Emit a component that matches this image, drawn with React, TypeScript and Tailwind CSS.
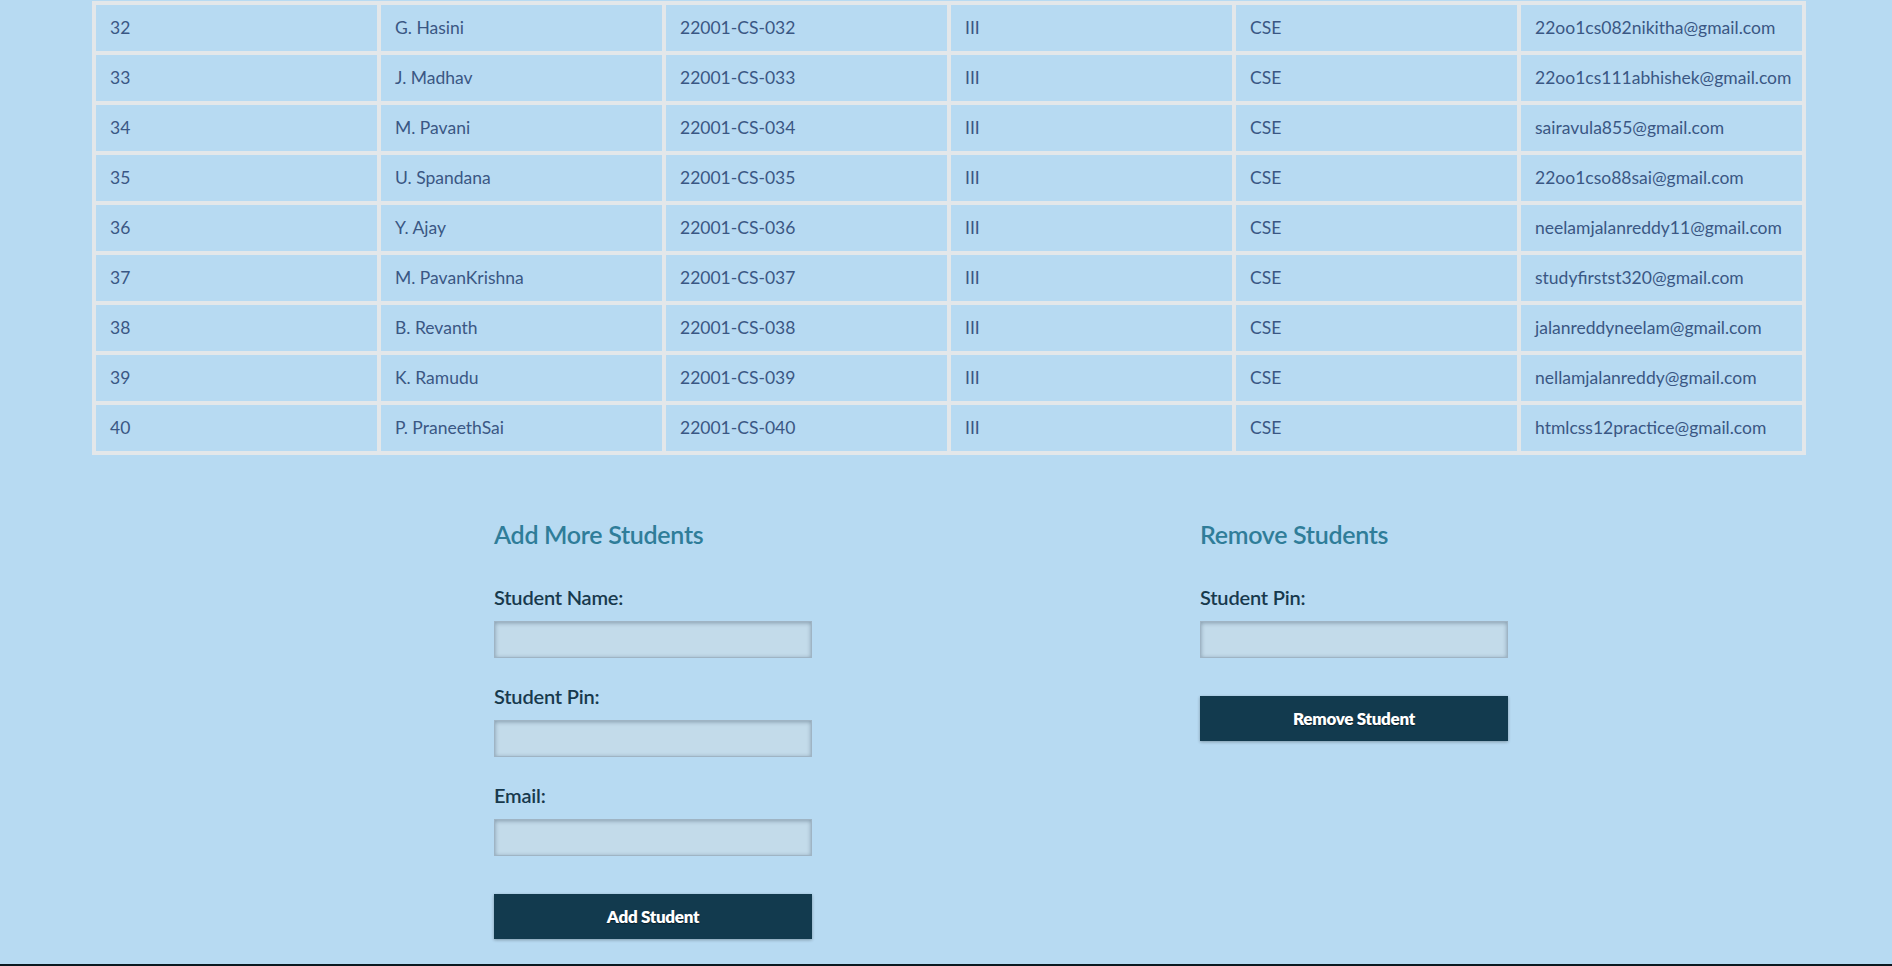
import React from 'react';

// ── DATA ──
const students = [
    { sno: 32, name: 'G. Hasini', pin: '22001-CS-032', year: 'III', branch: 'CSE', email: '22oo1cs082nikitha@gmail.com' },
    { sno: 33, name: 'J. Madhav', pin: '22001-CS-033', year: 'III', branch: 'CSE', email: '22oo1cs111abhishek@gmail.com' },
    { sno: 34, name: 'M. Pavani', pin: '22001-CS-034', year: 'III', branch: 'CSE', email: 'sairavula855@gmail.com' },
    { sno: 35, name: 'U. Spandana', pin: '22001-CS-035', year: 'III', branch: 'CSE', email: '22oo1cso88sai@gmail.com' },
    { sno: 36, name: 'Y. Ajay', pin: '22001-CS-036', year: 'III', branch: 'CSE', email: 'neelamjalanreddy11@gmail.com' },
    { sno: 37, name: 'M. PavanKrishna', pin: '22001-CS-037', year: 'III', branch: 'CSE', email: 'studyfirstst320@gmail.com' },
    { sno: 38, name: 'B. Revanth', pin: '22001-CS-038', year: 'III', branch: 'CSE', email: 'jalanreddyneelam@gmail.com' },
    { sno: 39, name: 'K. Ramudu', pin: '22001-CS-039', year: 'III', branch: 'CSE', email: 'nellamjalanreddy@gmail.com' },
    { sno: 40, name: 'P. PraneethSai', pin: '22001-CS-040', year: 'III', branch: 'CSE', email: 'htmlcss12practice@gmail.com' },
];

// ── FORM PIECES ──
function Field({ label }: { label: string }) {
    return (
        <div className="flex flex-col">
            <label className="text-[20px] leading-[22px] font-semibold text-[#17394d] tracking-[-0.2px] pt-[1px]">{label}</label>
            <input
                type="text"
                className="mt-[13px] h-[37px] w-full bg-[#c3dbea] border border-[#9fb4c4] shadow-[inset_0_1px_4px_rgba(40,60,80,0.4)] outline-none"
            />
        </div>
    );
}

function ActionButton({ children }: { children: React.ReactNode }) {
    return (
        <button className="h-[45px] w-full bg-[#123a4e] text-white text-[17px] font-extrabold tracking-[-0.3px] shadow-[0_1px_3px_rgba(0,0,0,0.3)] [text-shadow:0_1px_1px_rgba(0,0,0,0.5)]">
            {children}
        </button>
    );
}

// ── MAIN ──
export default function App() {
    return (
        <div className="h-[966px] overflow-hidden bg-[#b7daf2] flex flex-col pt-[1px]" style={{ fontFamily: 'Lato, "Open Sans", sans-serif' }}>
            {/* Student table */}
            <div className="pl-[92px]">
                <table className="w-[1714px] table-fixed bg-[#e3e7ea] border-separate border-spacing-[4px]">
                    <tbody>
                        {students.map((s) => (
                            <tr key={s.sno} className="h-[46px]">
                                {[s.sno, s.name, s.pin, s.year, s.branch, s.email].map((v, i) => (
                                    <td key={i} className="bg-[#b7daf2] p-0 pl-[14px] text-[17.5px] text-[#3a5784] whitespace-nowrap">
                                        {v}
                                    </td>
                                ))}
                            </tr>
                        ))}
                    </tbody>
                </table>
            </div>

            {/* Add / remove forms */}
            <div className="flex pl-[494px] gap-[388px] pt-[64px]">
                <div className="w-[318px] flex flex-col">
                    <h2 className="text-[25px] leading-[30px] font-semibold text-[#2f7d99] tracking-[-0.3px]">Add More Students</h2>
                    <div className="mt-[36px] flex flex-col gap-[26px]">
                        <Field label="Student Name:" />
                        <Field label="Student Pin:" />
                        <Field label="Email:" />
                    </div>
                    <div className="mt-[38px]">
                        <ActionButton>Add Student</ActionButton>
                    </div>
                </div>

                <div className="w-[308px] flex flex-col">
                    <h2 className="text-[25px] leading-[30px] font-semibold text-[#2f7d99] tracking-[-0.3px]">Remove Students</h2>
                    <div className="mt-[36px]">
                        <Field label="Student Pin:" />
                    </div>
                    <div className="mt-[38px]">
                        <ActionButton>Remove Student</ActionButton>
                    </div>
                </div>
            </div>

            {/* Footer edge */}
            <div className="mt-auto h-[2px] bg-[#0a1820]" />
        </div>
    );
}
